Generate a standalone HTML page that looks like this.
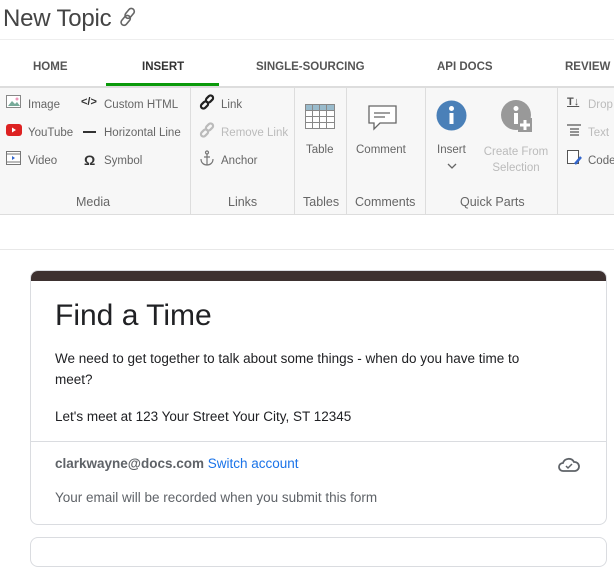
<!DOCTYPE html>
<html><head><meta charset="utf-8"><style>
*{margin:0;padding:0;box-sizing:border-box}
body{width:614px;height:548px;overflow:hidden;background:#fff;font-family:"Liberation Sans",sans-serif;position:relative}
.abs{position:absolute}
.title{left:3px;top:5px;font-size:24px;color:#444;letter-spacing:-0.2px}
.tabs span{position:absolute;top:61px;font-size:11.5px;font-weight:bold;color:#555}
.rib{left:0;top:86px;width:614px;height:129px;background:#f7f7f7;border-top:2px solid #ddd;border-bottom:1px solid #ddd}
.sep{position:absolute;top:86px;width:1px;height:128px;background:#ddd}
.it{position:absolute;font-size:11.5px;color:#666;white-space:nowrap;margin-top:2px}
.dis{color:#bbb}
.gl{position:absolute;top:195px;font-size:12.5px;color:#666}
.card{left:30px;top:270px;width:577px;height:255px;border:1px solid #dadce0;border-radius:8px;overflow:hidden}
.ct{font-size:13.5px;color:#202124}
</style></head><body>
<div class="abs title">New Topic <svg width="22" height="22" viewBox="0 0 22 22" style="vertical-align:-2px"><g fill="none" stroke="#666" stroke-width="1.6"><rect x="9" y="2" width="6" height="11" rx="3" transform="rotate(40 12 7)"/><rect x="5" y="9" width="6" height="11" rx="3" transform="rotate(40 8 14)"/></g></svg></div>
<div class="abs" style="left:0;top:39px;width:614px;height:1px;background:#eee"></div>
<div class="tabs"><span style="left:33px">HOME</span><span style="left:142px;color:#333">INSERT</span><span style="left:256px">SINGLE-SOURCING</span><span style="left:437px">API DOCS</span><span style="left:565px">REVIEW</span></div>
<div class="abs rib"></div>
<div class="abs" style="left:106px;top:83px;width:113px;height:3px;background:#0a9a0a"></div>
<div class="sep" style="left:190px"></div><div class="sep" style="left:294px"></div><div class="sep" style="left:346px"></div><div class="sep" style="left:425px"></div><div class="sep" style="left:557px"></div>
<svg class="abs" style="left:6px;top:95px" width="15" height="13"><rect x="0.5" y="0.5" width="14" height="12" fill="#fff" stroke="#888"/><path d="M2 11L6 6l3 3 2-2 3 4z" fill="#7a9"/><circle cx="11" cy="4" r="1.5" fill="#e9b"/></svg>
<div class="it" style="left:28px;top:97px">Image</div>
<svg class="abs" style="left:6px;top:124px" width="16" height="12"><rect width="16" height="12" rx="3" fill="#d22"/><path d="M6 3.5v5l4-2.5z" fill="#fff"/></svg>
<div class="it" style="left:28px;top:125px">YouTube</div>
<svg class="abs" style="left:6px;top:151px" width="15" height="14"><rect x="0.5" y="0.5" width="14" height="13" fill="#fff" stroke="#777"/><path d="M1 3h13M1 11h13" stroke="#777"/><path d="M6 5v4l3-2z" fill="#36c"/></svg>
<div class="it" style="left:28px;top:153px">Video</div>
<div class="it" style="left:81px;top:94px;color:#333;font-weight:bold;font-size:11px">&lt;/&gt;</div>
<div class="it" style="left:104px;top:97px">Custom HTML</div>
<div class="abs" style="left:83px;top:131px;width:13px;height:2px;background:#333"></div>
<div class="it" style="left:104px;top:125px">Horizontal Line</div>
<div class="it" style="left:84px;top:150px;color:#333;font-weight:bold;font-size:14px">Ω</div>
<div class="it" style="left:104px;top:153px">Symbol</div>
<div class="gl" style="left:76px">Media</div>
<svg class="abs" style="left:199px;top:94px" width="16" height="16"><g fill="none" stroke="#222" stroke-width="2.2"><rect x="8" y="1" width="5" height="8" rx="2.5" transform="rotate(45 10.5 5)"/><rect x="3" y="7" width="5" height="8" rx="2.5" transform="rotate(45 5.5 11)"/></g></svg>
<div class="it" style="left:221px;top:97px">Link</div>
<svg class="abs" style="left:199px;top:122px" width="16" height="16"><g fill="none" stroke="#bbb" stroke-width="2.2"><rect x="8" y="1" width="5" height="8" rx="2.5" transform="rotate(45 10.5 5)"/><rect x="3" y="7" width="5" height="8" rx="2.5" transform="rotate(45 5.5 11)"/></g></svg>
<div class="it dis" style="left:221px;top:125px">Remove Link</div>
<svg class="abs" style="left:199px;top:150px" width="16" height="16"><g fill="none" stroke="#777" stroke-width="1.2"><circle cx="8" cy="2.5" r="1.5"/><path d="M8 4v11M5 7h6M2 9c0 4 3 6 6 6s6-2 6-6"/></g></svg>
<div class="it" style="left:221px;top:153px">Anchor</div>
<div class="gl" style="left:228px">Links</div>
<svg class="abs" style="left:305px;top:104px" width="30" height="25"><rect x="0.5" y="0.5" width="29" height="24" fill="#fff" stroke="#888"/><rect x="1" y="1" width="28" height="5" fill="#9bc"/><path d="M0 6.5h30M0 12.5h30M0 18.5h30M7.5 0v25M14.5 0v25M21.5 0v25" stroke="#888"/></svg>
<div class="it" style="left:306px;top:142px">Table</div>
<div class="gl" style="left:303px">Tables</div>
<svg class="abs" style="left:368px;top:105px" width="29" height="27"><path d="M1 1h27v17H12l-6 6v-6H1z" fill="#fff" stroke="#666" stroke-width="1.3"/><path d="M6 8h16M6 12h11" stroke="#666" stroke-width="1.3"/></svg>
<div class="it" style="left:356px;top:142px">Comment</div>
<div class="gl" style="left:355px">Comments</div>
<svg class="abs" style="left:436px;top:100px" width="31" height="31"><circle cx="15.5" cy="15.5" r="15" fill="#4a80b8"/><circle cx="15.5" cy="8.5" r="2.5" fill="#fff"/><rect x="13.5" y="13" width="4" height="11" fill="#fff"/></svg>
<div class="it" style="left:437px;top:142px">Insert</div>
<svg class="abs" style="left:447px;top:163px" width="10" height="7"><path d="M1 1l4 4 4-4" fill="none" stroke="#666" stroke-width="1.3"/></svg>
<svg class="abs" style="left:501px;top:100px" width="32" height="32"><circle cx="15" cy="15" r="15" fill="#999"/><circle cx="15" cy="8.5" r="2.5" fill="#fff"/><rect x="13" y="13" width="4" height="11" fill="#fff"/><rect x="17" y="18" width="14" height="14" fill="#999"/><path d="M24 20v10M19 25h10" stroke="#fff" stroke-width="3"/></svg>
<div class="it dis" style="left:478px;top:142px;text-align:center;width:76px;line-height:16px;white-space:normal">Create From<br>Selection</div>
<div class="gl" style="left:460px">Quick Parts</div>
<div class="it" style="left:567px;top:94px;color:#555;font-size:11px;font-weight:bold;text-decoration:underline">T↓</div>
<div class="it dis" style="left:588px;top:97px">Drop</div>
<svg class="abs" style="left:567px;top:124px" width="14" height="12"><path d="M0 1h14M3 5h9M3 8h9M3 11h9" stroke="#555" stroke-width="1.3"/></svg>
<div class="it dis" style="left:588px;top:125px">Text</div>
<svg class="abs" style="left:567px;top:150px" width="15" height="16"><rect x="0.5" y="0.5" width="11" height="13" fill="#fff" stroke="#555"/><path d="M8 14l6-7" stroke="#36c" stroke-width="2.5"/></svg>
<div class="it" style="left:588px;top:153px">Code</div>
<div class="abs" style="left:0;top:249px;width:614px;height:1px;background:#e8e8e8"></div>
<div class="abs card">
<div style="height:10px;background:#3d3130"></div>
<div class="abs" style="left:24px;top:28px;font-size:30px;color:#202124">Find a Time</div>
<div class="abs ct" style="left:24px;top:77px;width:540px;line-height:21px">We need to get together to talk about some things - when do you have time to<br>meet?</div>
<div class="abs ct" style="left:24px;top:138px">Let's meet at 123 Your Street Your City, ST 12345</div>
<div class="abs" style="left:0;top:170px;width:577px;height:1px;background:#dadce0"></div>
<div class="abs ct" style="left:24px;top:185px;color:#5f6368"><b>clarkwayne@docs.com</b> <span style="color:#1a73e8">Switch account</span></div>
<svg class="abs" style="left:527px;top:186px" width="22" height="16"><path d="M5 14a4 4 0 010-8 6 6 0 0111-1 4.5 4.5 0 011 9z" fill="none" stroke="#5f6368" stroke-width="1.8"/><path d="M8 9l2 2 4-4" fill="none" stroke="#5f6368" stroke-width="1.5"/></svg>
<div class="abs ct" style="left:24px;top:219px;color:#5f6368">Your email will be recorded when you submit this form</div>
</div>
<div class="abs" style="left:30px;top:537px;width:577px;height:30px;border:1px solid #dadce0;border-radius:8px"></div>
</body></html>
